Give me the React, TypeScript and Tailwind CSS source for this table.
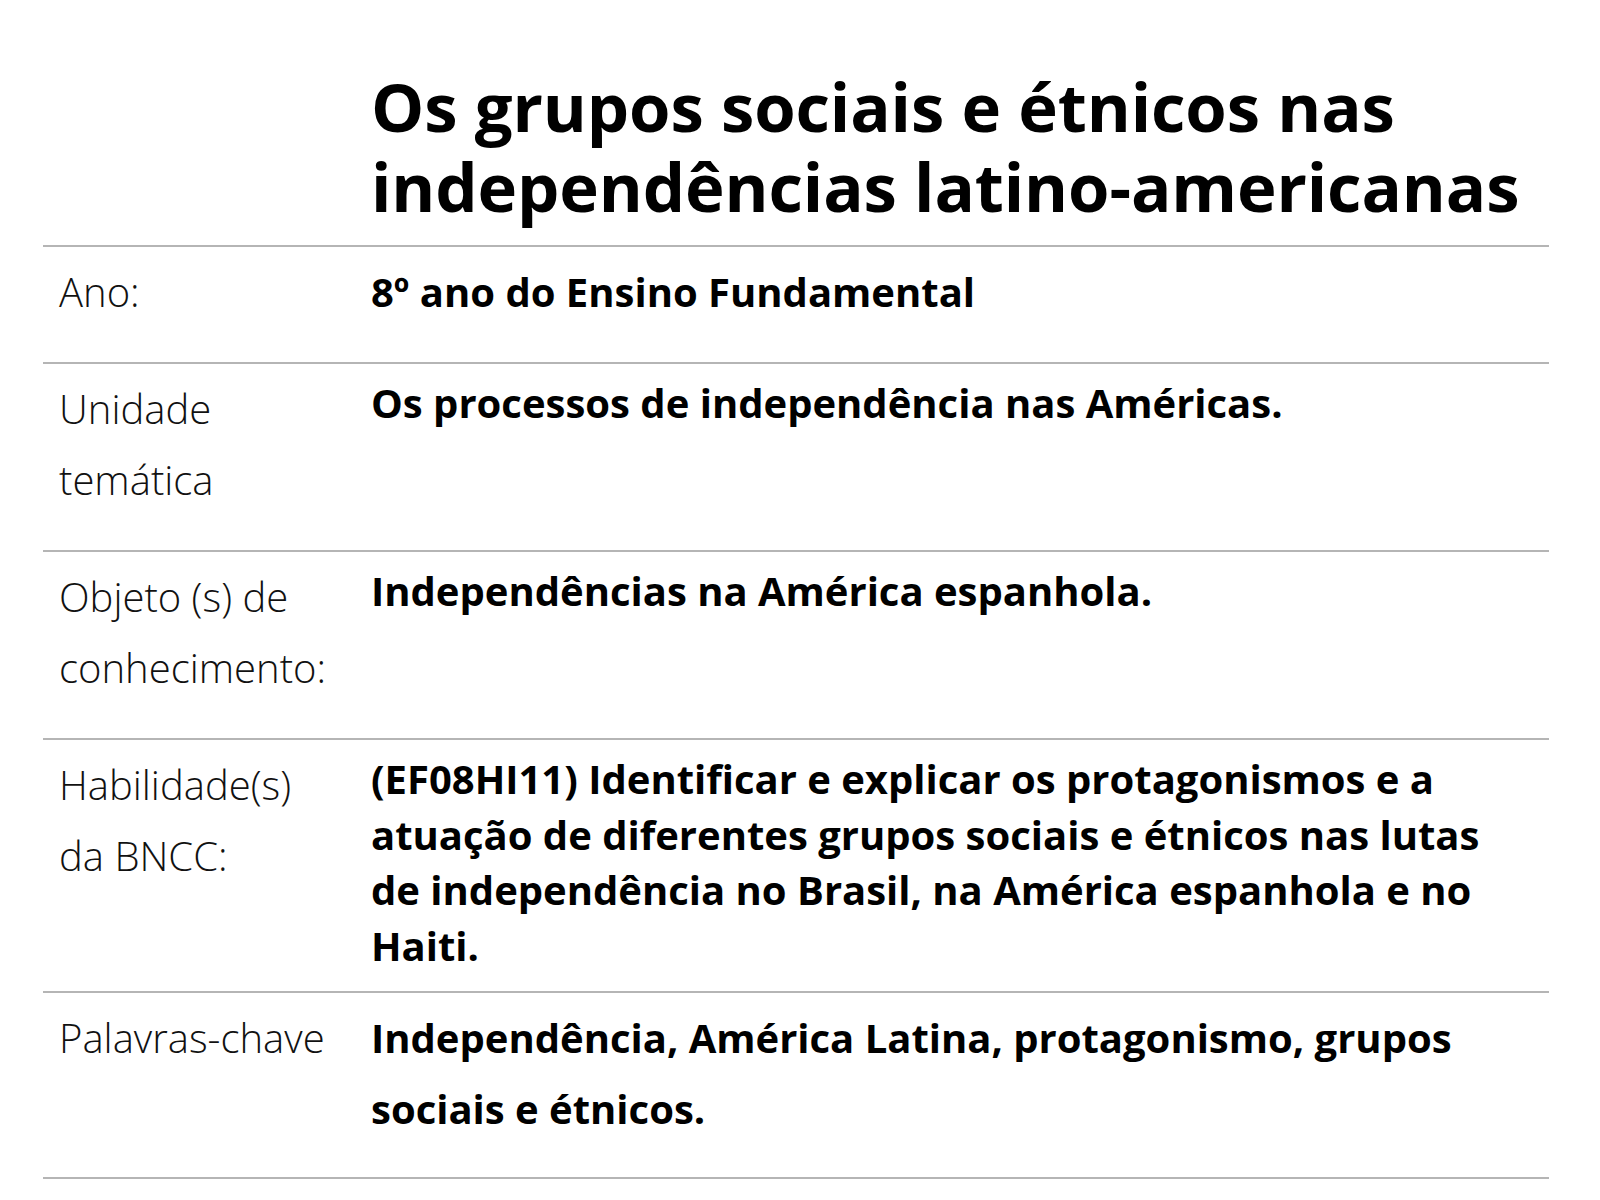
import React from 'react';

type Row = {
  label: string[];
  value: string;
  loose?: boolean;
};

const rows: Row[] = [
  { label: ['Ano:'], value: '8º ano do Ensino Fundamental', loose: true },
  { label: ['Unidade', 'temática'], value: 'Os processos de independência nas Américas.' },
  { label: ['Objeto (s) de', 'conhecimento:'], value: 'Independências na América espanhola.' },
  {
    label: ['Habilidade(s)', 'da BNCC:'],
    value:
      '(EF08HI11) Identificar e explicar os protagonismos e a atuação de diferentes grupos sociais e étnicos nas lutas de independência no Brasil, na América espanhola e no Haiti.',
  },
  {
    label: ['Palavras-chave'],
    value: 'Independência, América Latina, protagonismo, grupos sociais e étnicos.',
    loose: true,
  },
];

export default function App() {
  return (
    <div className="min-h-[1200px] w-[1600px] bg-white text-black font-['Open_Sans',sans-serif]">
      <div className="ml-[43px] w-[1506px]">
        {/* Title */}
        <div className="grid grid-cols-[328px_1fr] pt-[66px] pb-[19px]">
          <div />
          <h1 className="text-[67px] leading-[80px] font-bold tracking-[-0.1px] whitespace-nowrap">
            Os grupos sociais e étnicos nas
            <br />
            independências latino-americanas
          </h1>
        </div>

        {/* Table */}
        <div className="border-t-2 border-[#b5b5b5]">
          {rows.map((row) => (
            <div
              key={row.label.join(' ')}
              className="grid grid-cols-[328px_1fr] items-start border-b-2 border-[#b5b5b5]"
            >
              <div className="pl-4 pt-[9px] pb-[35px] text-[40px] leading-[71px] font-light text-[#111]">
                {row.label.map((l) => (
                  <div key={l}>{l}</div>
                ))}
              </div>
              <div
                className={`pr-4 text-[40px] font-bold ${
                  row.loose ? 'pt-[9px] pb-[33px] leading-[71px]' : 'pt-[11px] pb-[18px] leading-[55.5px]'
                }`}
              >
                {row.value}
              </div>
            </div>
          ))}
        </div>
      </div>
    </div>
  );
}
